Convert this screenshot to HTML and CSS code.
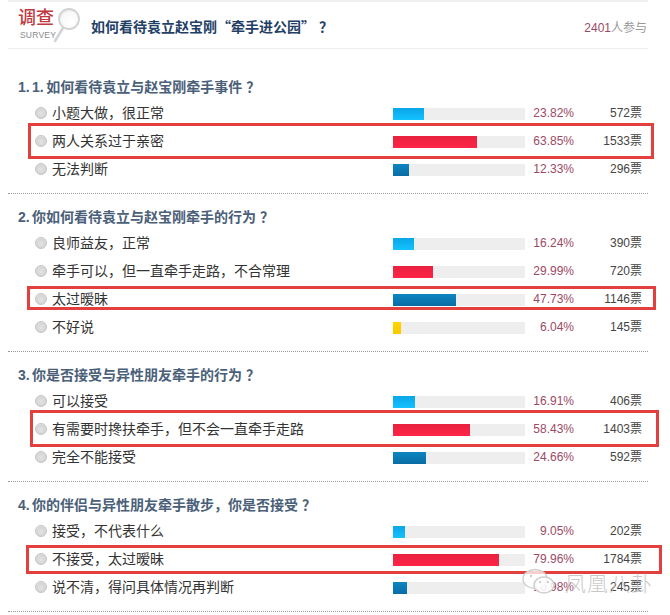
FILE: index.html
```html
<!DOCTYPE html>
<html lang="zh-CN">
<head>
<meta charset="utf-8">
<title>调查</title>
<link rel="stylesheet" href="styles.css">
</head>
<body>
<div class="page">
  <header class="head">
    <div class="brand">
      <div class="brand-text">
        <span class="brand-cn">调查</span>
        <span class="brand-en">SURVEY</span>
      </div>
      <svg class="lens" width="28" height="40" viewBox="0 0 28 40" aria-hidden="true">
        <defs>
          <radialGradient id="glass" cx="0.6" cy="0.65" r="0.7">
            <stop offset="0" stop-color="#ffffff"/>
            <stop offset="0.7" stop-color="#f8f8f8"/>
            <stop offset="1" stop-color="#e4e4e4"/>
          </radialGradient>
        </defs>
        <path d="M10 24 L2 37" stroke="#d4d4d4" stroke-width="2.6" stroke-linecap="round"/>
        <circle cx="16" cy="15" r="10" fill="url(#glass)" stroke="#d2d2d2" stroke-width="1.8"/>
      </svg>
    </div>
    <h1 class="head-title">如何看待袁立赵宝刚“牵手进公园”<span class="qm">？</span></h1>
    <div class="head-count"><span class="num">2401</span>人参与</div>
  </header>

  <section class="q q-first">
    <h2 class="q-title">1. 1. 如何看待袁立与赵宝刚牵手事件<span class="qm">？</span></h2>
    <div class="row"><i class="radio"></i><span class="label">小题大做，很正常</span><div class="track"><div class="fill sky" style="width:23.82%"></div></div><span class="pct">23.82%</span><span class="votes">572票</span></div>
    <div class="row"><i class="radio"></i><span class="label">两人关系过于亲密</span><div class="track"><div class="fill red" style="width:63.85%"></div></div><span class="pct">63.85%</span><span class="votes">1533票</span></div>
    <div class="row"><i class="radio"></i><span class="label">无法判断</span><div class="track"><div class="fill blue" style="width:12.33%"></div></div><span class="pct">12.33%</span><span class="votes">296票</span></div>
  </section>

  <section class="q">
    <h2 class="q-title">2. 你如何看待袁立与赵宝刚牵手的行为<span class="qm">？</span></h2>
    <div class="row"><i class="radio"></i><span class="label">良师益友，正常</span><div class="track"><div class="fill sky" style="width:16.24%"></div></div><span class="pct">16.24%</span><span class="votes">390票</span></div>
    <div class="row"><i class="radio"></i><span class="label">牵手可以，但一直牵手走路，不合常理</span><div class="track"><div class="fill red" style="width:29.99%"></div></div><span class="pct">29.99%</span><span class="votes">720票</span></div>
    <div class="row"><i class="radio"></i><span class="label">太过暧昧</span><div class="track"><div class="fill blue" style="width:47.73%"></div></div><span class="pct">47.73%</span><span class="votes">1146票</span></div>
    <div class="row"><i class="radio"></i><span class="label">不好说</span><div class="track"><div class="fill yellow" style="width:6.04%"></div></div><span class="pct">6.04%</span><span class="votes">145票</span></div>
  </section>

  <section class="q">
    <h2 class="q-title">3. 你是否接受与异性朋友牵手的行为<span class="qm">？</span></h2>
    <div class="row"><i class="radio"></i><span class="label">可以接受</span><div class="track"><div class="fill sky" style="width:16.91%"></div></div><span class="pct">16.91%</span><span class="votes">406票</span></div>
    <div class="row"><i class="radio"></i><span class="label">有需要时搀扶牵手，但不会一直牵手走路</span><div class="track"><div class="fill red" style="width:58.43%"></div></div><span class="pct">58.43%</span><span class="votes">1403票</span></div>
    <div class="row"><i class="radio"></i><span class="label">完全不能接受</span><div class="track"><div class="fill blue" style="width:24.66%"></div></div><span class="pct">24.66%</span><span class="votes">592票</span></div>
  </section>

  <section class="q">
    <h2 class="q-title">4. 你的伴侣与异性朋友牵手散步，你是否接受<span class="qm">？</span></h2>
    <div class="row"><i class="radio"></i><span class="label">接受，不代表什么</span><div class="track"><div class="fill sky" style="width:9.05%"></div></div><span class="pct">9.05%</span><span class="votes">202票</span></div>
    <div class="row"><i class="radio"></i><span class="label">不接受，太过暧昧</span><div class="track"><div class="fill red" style="width:79.96%"></div></div><span class="pct">79.96%</span><span class="votes">1784票</span></div>
    <div class="row"><i class="radio"></i><span class="label">说不清，得问具体情况再判断</span><div class="track"><div class="fill blue" style="width:10.98%"></div></div><span class="pct">10.98%</span><span class="votes">245票</span></div>
  </section>

  <div class="mark mark-1"></div>
  <div class="mark mark-2"></div>
  <div class="mark mark-3"></div>
  <div class="mark mark-4"></div>

  <div class="wm">
    <svg class="wm-icon" width="34" height="28" viewBox="0 0 34 28" aria-hidden="true">
      <ellipse cx="13" cy="11" rx="12" ry="9.5" fill="rgba(255,255,255,.75)" stroke="#cfcfcf" stroke-width="1.4"/>
      <ellipse cx="22" cy="17" rx="10" ry="8" fill="rgba(255,255,255,.85)" stroke="#cfcfcf" stroke-width="1.4"/>
      <circle cx="18" cy="14" r="1.2" fill="#cfcfcf"/>
      <circle cx="26" cy="14" r="1.2" fill="#cfcfcf"/>
      <circle cx="9" cy="8" r="1.2" fill="#cfcfcf"/>
    </svg>
    <span class="wm-text">凤凰八卦</span>
  </div>
</div>
</body>
</html>
```

FILE: styles.css
```css
* { box-sizing: border-box; }
html, body { margin: 0; padding: 0; background: #fff; }
body {
  width: 670px;
  height: 615px;
  overflow: hidden;
  font-family: "Liberation Sans", "Noto Sans CJK SC", sans-serif;
  color: #333;
}
.page {
  position: relative;
  width: 640px;
  margin-left: 8px;
}
.head {
  display: flex;
  align-items: center;
  height: 49px;
  border-top: 2px solid #f0f0f0;
  border-bottom: 1px solid #eeeeee;
}
.brand {
  display: flex;
  align-items: flex-start;
  width: 83px;
  padding-left: 10px;
  flex: none;
}
.brand-text {
  display: flex;
  flex-direction: column;
  width: 38px;
}
.brand-cn {
  font: 500 18px/20px "Noto Sans CJK SC", sans-serif;
  color: #c0393f;
  white-space: nowrap;
}
.brand-en {
  font: 400 8.5px/10px "Liberation Sans", sans-serif;
  color: #8a8a8a;
  margin-top: 4px;
  padding-left: 2px;
  letter-spacing: 0.2px;
}
.lens { flex: none; margin-left: -3px; margin-top: -2px; }
.head-title {
  margin: 1px 0 0;
  font: 700 14px/20px "Noto Sans CJK SC", sans-serif;
  color: #1f3f66;
  flex: 1;
  white-space: nowrap;
}
.head-count {
  font: 400 12px/16px "Liberation Sans", "Noto Sans CJK SC", sans-serif;
  color: #999;
  margin: 5px 1px 0 0;
}
.num { color: #9b4a64; }
.qm { margin-left: 4px; }
.q {
  padding: 11px 0 10px;
  border-bottom: 1px dotted #999;
}
.q-first { padding-top: 26px; }
.q-title {
  margin: 0;
  padding-left: 10px;
  font: 700 14px/24px "Liberation Sans", "Noto Sans CJK SC", sans-serif;
  color: #4a6079;
  word-spacing: -1.5px;
}
.row {
  display: flex;
  align-items: center;
  height: 28px;
  padding: 0 6px 0 27px;
}
.radio {
  flex: none;
  width: 12px;
  height: 12px;
  margin-right: 5px;
  border: 1px solid #c4c4c4;
  border-radius: 50%;
  background: radial-gradient(circle at 50% 55%, #e4e4e4 0, #d6d6d6 55%, #efefef 100%);
}
.label {
  flex: 1;
  padding-bottom: 2px;
  font: 400 14px/20px "Noto Sans CJK SC", sans-serif;
  color: #333;
  white-space: nowrap;
}
.track {
  flex: none;
  width: 132px;
  height: 12px;
  margin-top: 2px;
  background: #eeeeee;
}
.fill { height: 100%; }
.sky { background: linear-gradient(#0aa6e6, #14c2ff); }
.red { background: linear-gradient(#e8213f, #ff2547); }
.blue { background: linear-gradient(#0c86c2, #0a6ca4); }
.yellow { background: linear-gradient(#ffd400, #fbc800); }
.pct {
  flex: none;
  width: 49px;
  text-align: right;
  font-size: 12px;
  color: #9b4a64;
}
.votes {
  flex: none;
  width: 68px;
  padding-bottom: 3px;
  text-align: right;
  font-size: 12px;
  color: #444;
}
.mark {
  position: absolute;
  border: 3px solid #e2403f;
  pointer-events: none;
}
.mark-1 { left: 20px; top: 123px; width: 626px; height: 36px; }
.mark-2 { left: 19px; top: 286px; width: 629px; height: 24px; }
.mark-3 { left: 22px; top: 410px; width: 629px; height: 37px; }
.mark-4 { left: 18px; top: 545px; width: 636px; height: 29px; }
.wm {
  position: absolute;
  left: 514px;
  top: 568px;
  display: flex;
  align-items: center;
  gap: 9px;
}
.wm-text {
  font: 300 21px/28px "Noto Sans CJK SC", sans-serif;
  color: rgba(190, 190, 190, .85);
  letter-spacing: 1px;
  white-space: nowrap;
}
```
